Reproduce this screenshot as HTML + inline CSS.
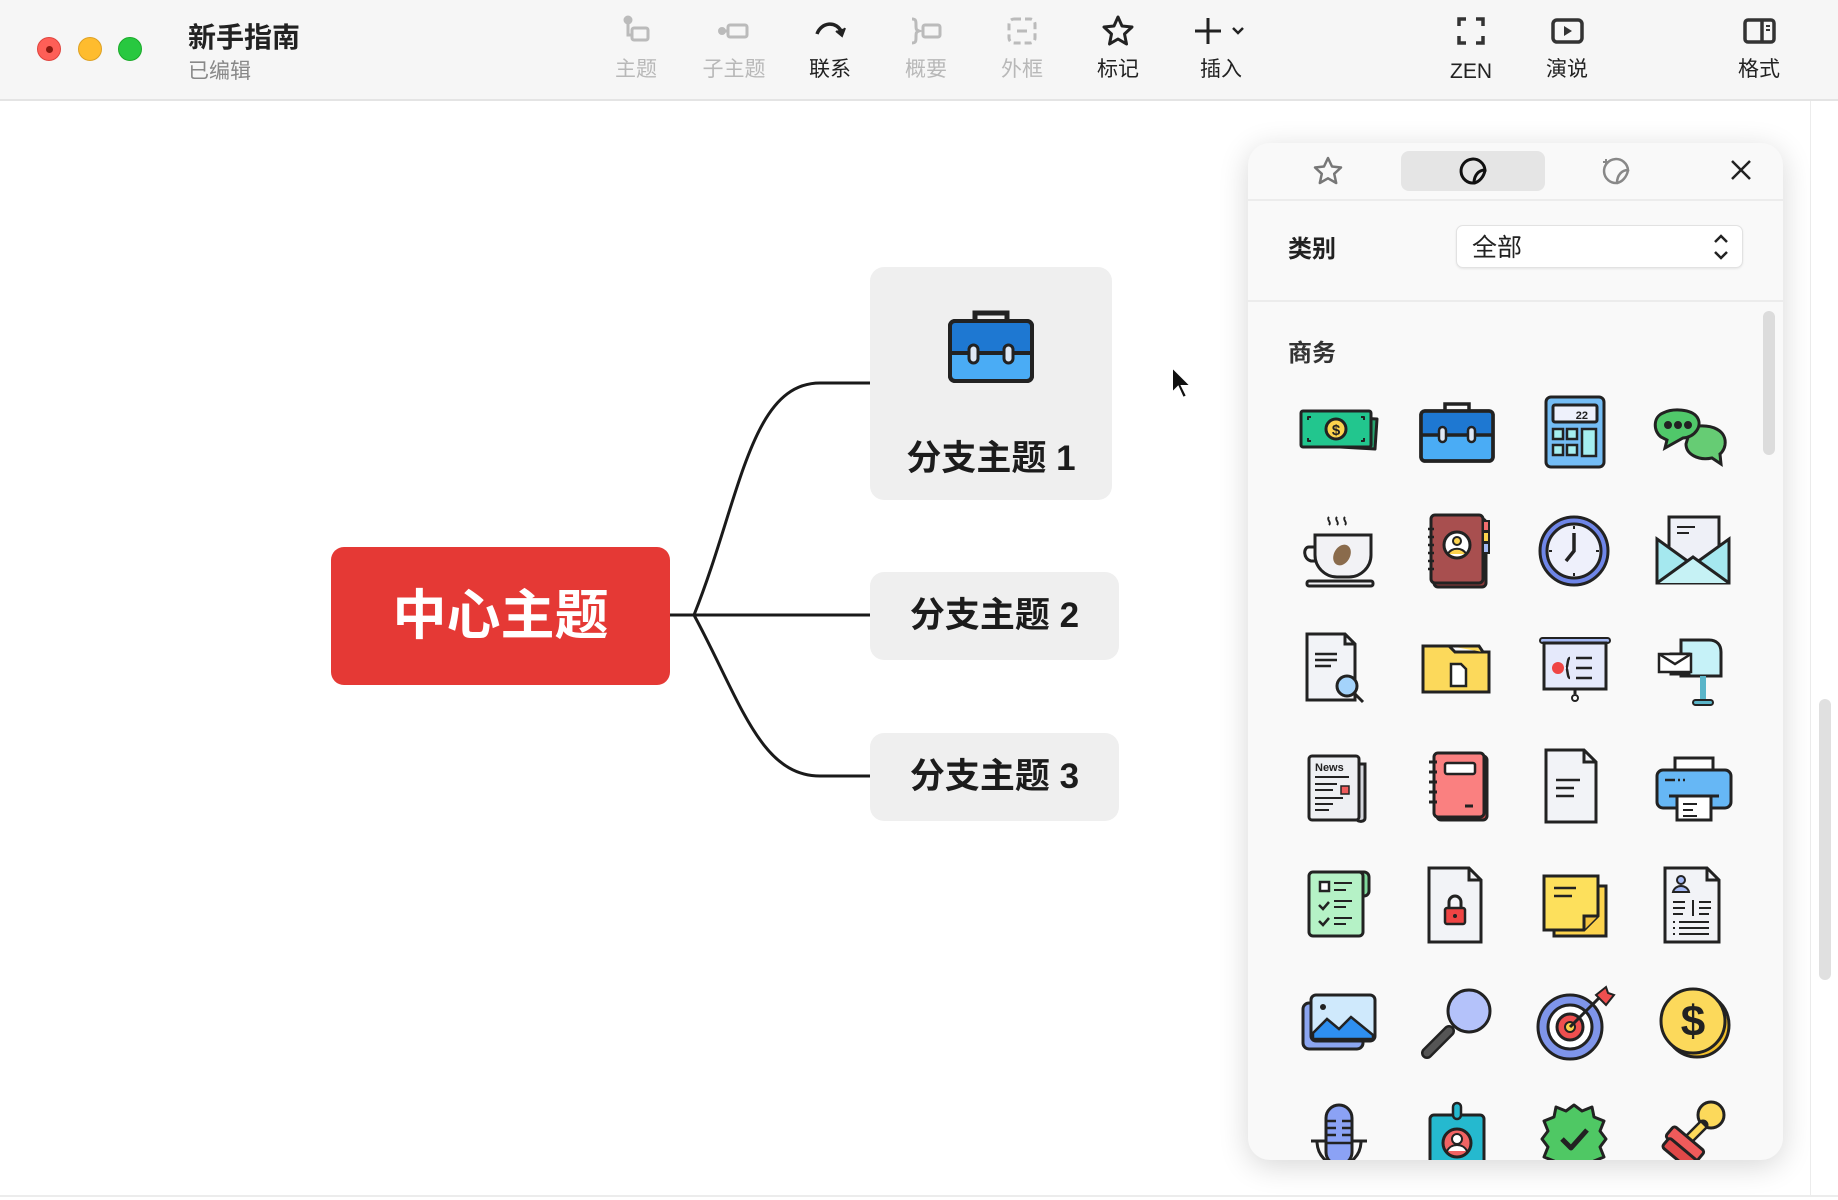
<!DOCTYPE html>
<html><head><meta charset="utf-8">
<style>
*{margin:0;padding:0;box-sizing:border-box}
body{width:1838px;height:1200px;background:#fff;font-family:"Liberation Sans","Noto Sans CJK SC",sans-serif;position:relative;overflow:hidden;color:#222}
.abs{position:absolute}
.tb{position:absolute;left:0;top:0;width:1838px;height:101px;background:#f6f6f6;border-bottom:2px solid #e4e4e4}
.dot{position:absolute;top:37px;width:24px;height:24px;border-radius:50%}
.item{position:absolute;top:14px;width:100px;margin-left:-50px;text-align:center;font-size:21px;line-height:28px}
.item svg{display:block;margin:0 auto 7px;width:34px;height:34px}
.item span{display:block;height:28px;line-height:30px}
.g{color:#b8b8b8}
.node{position:absolute;background:#efefef;border-radius:14px;font-weight:bold;font-size:35px;text-align:center;color:#1c1c1c}
.ic{position:absolute;width:84px;height:84px}
</style></head><body>
<div class="tb">
 <div class="dot" style="left:37px;background:#fe5f57;border:1px solid #e0443e"><div style="position:absolute;left:8px;top:8px;width:7px;height:7px;border-radius:50%;background:#8c1a10"></div></div>
 <div class="dot" style="left:78px;background:#febc2e;border:1px solid #dea123"></div>
 <div class="dot" style="left:118px;background:#28c840;border:1px solid #1aab29"></div>
 <div class="abs" style="left:188px;top:16px;font-size:28px;font-weight:bold;color:#222">新手指南</div>
 <div class="abs" style="left:188px;top:55px;font-size:21px;color:#888">已编辑</div>

 <div class="item g" style="left:636px"><svg viewBox="0 0 34 34" fill="none" stroke="#bbb" stroke-width="3"><circle cx="9" cy="6" r="3" fill="#bbb"/><path d="M9 9v12h4"/><rect x="13" y="14" width="16" height="12" rx="2"/></svg><span>主题</span></div>
 <div class="item g" style="left:734px"><svg viewBox="0 0 34 34" fill="none" stroke="#bbb" stroke-width="3"><circle cx="5" cy="17" r="2.5" fill="#bbb"/><path d="M7 17h4"/><rect x="11" y="11" width="19" height="12" rx="2"/></svg><span>子主题</span></div>
 <div class="item" style="left:830px;color:#222"><svg viewBox="0 0 34 34" fill="none" stroke="#222" stroke-width="3.5"><path d="M4 20C8 8 24 6 29 19"/><path d="M23 17l6 5 3-8" fill="#222" stroke-width="2"/></svg><span>联系</span></div>
 <div class="item g" style="left:926px"><svg viewBox="0 0 34 34" fill="none" stroke="#bbb" stroke-width="3"><path d="M3 5c4 0 4 2 4 6s0 5 3 6c-3 1-3 2-3 6s0 6-4 6"/><rect x="14" y="11" width="17" height="12" rx="2"/></svg><span>概要</span></div>
 <div class="item g" style="left:1022px"><svg viewBox="0 0 34 34" fill="none" stroke="#bbb" stroke-width="3"><rect x="4" y="5" width="26" height="24" rx="5" stroke-dasharray="7 4"/><path d="M12 17h10"/></svg><span>外框</span></div>
 <div class="item" style="left:1118px;color:#222"><svg viewBox="0 0 34 34" fill="none" stroke="#222" stroke-width="3" stroke-linejoin="round"><path d="M17 3l4 9 10 1-7.5 7 2 10L17 25l-8.5 5 2-10L3 13l10-1z"/></svg><span>标记</span></div>
 <div class="item" style="left:1221px;color:#222"><svg viewBox="0 0 60 34" style="width:60px" fill="none" stroke="#222" stroke-width="3"><path d="M17 4v26M4 17h26"/><path d="M42 14l5 5 5-5" stroke-width="2.5"/></svg><span>插入</span></div>
 <div class="item" style="left:1471px;color:#222"><svg viewBox="0 0 34 34" fill="none" stroke="#333" stroke-width="3.5"><path d="M5 12V5h7M22 5h7v7M29 22v7h-7M12 29H5v-7"/></svg><span style="line-height:34px">ZEN</span></div>
 <div class="item" style="left:1567px;color:#222"><svg viewBox="0 0 34 34" fill="none" stroke="#333" stroke-width="3.5"><rect x="3" y="6" width="29" height="22" rx="4"/><path d="M14 12v10l8-5z" fill="#333" stroke="none"/></svg><span>演说</span></div>
 <div class="item" style="left:1759px;color:#222"><svg viewBox="0 0 34 34" fill="none" stroke="#333" stroke-width="3.5"><rect x="3" y="6" width="29" height="22" rx="3"/><path d="M20 6v22"/><path d="M24 12h4M24 16h4" stroke-width="2"/></svg><span>格式</span></div>
</div>

<svg class="abs" style="left:0;top:0" width="1838" height="1200" fill="none" stroke="#1a1a1a" stroke-width="3">
 <path d="M669 615H694"/>
 <path d="M694 615C740 500 750 383 820 383H870"/>
 <path d="M694 615H870"/>
 <path d="M694 615C740 700 760 776 820 776H870"/>
</svg>
<div class="abs" style="left:331px;top:547px;width:339px;height:138px;background:#e53935;border-radius:13px;color:#fff;font-size:54px;font-weight:bold;text-align:center;line-height:138px">中心主题</div>
<div class="node" style="left:870px;top:267px;width:242px;height:233px">
 <svg style="position:absolute;left:77px;top:40px" width="88" height="80" viewBox="0 0 88 80"><path d="M28 14V6h32v8" fill="none" stroke="#222" stroke-width="5"/><rect x="3" y="14" width="82" height="60" rx="5" fill="#4aacf5" stroke="#222" stroke-width="4"/><path d="M5 16h78v30H5z" fill="#1e78d2"/><path d="M3 46h82" stroke="#222" stroke-width="4"/><rect x="3" y="14" width="82" height="60" rx="5" fill="none" stroke="#222" stroke-width="4"/><rect x="22" y="38" width="9" height="18" rx="4.5" fill="#dfe8f5" stroke="#222" stroke-width="3"/><rect x="57" y="38" width="9" height="18" rx="4.5" fill="#dfe8f5" stroke="#222" stroke-width="3"/></svg>
 <div style="position:absolute;left:0;right:0;top:163px">分支主题 1</div>
</div>
<div class="node" style="left:870px;top:572px;width:249px;height:88px;line-height:88px">分支主题 2</div>
<div class="node" style="left:870px;top:733px;width:249px;height:88px;line-height:88px">分支主题 3</div>
<svg class="abs" style="left:1170px;top:365px" width="24" height="36" viewBox="0 0 24 36"><path d="M2 2v26l6-6 5 11 4-2-5-10h9z" fill="#111" stroke="#fff" stroke-width="2"/></svg>

<div class="abs" style="left:1810px;top:101px;width:1px;height:1095px;background:#ececec"></div>
<div class="abs" style="left:0;top:1195px;width:1838px;height:2px;background:#ececec"></div>
<div class="abs" style="left:1819px;top:699px;width:12px;height:281px;border-radius:6px;background:#e0e0e0"></div>

<div class="abs" style="left:1248px;top:143px;width:535px;height:1017px;background:#f9f9f9;border-radius:22px;box-shadow:0 6px 30px rgba(0,0,0,.16);overflow:hidden">
 <div class="abs" style="left:0;top:56px;width:535px;height:2px;background:#ececec"></div>
 <div class="abs" style="left:153px;top:8px;width:144px;height:40px;border-radius:8px;background:#e5e5e5"></div>
 <svg class="abs" style="left:64px;top:12px" width="32" height="32" viewBox="0 0 32 32" fill="none" stroke="#777" stroke-width="2.5" stroke-linejoin="round"><path d="M16 3l4 8.5 9 1-6.8 6.3 2 9.2L16 23.3 7.8 28l2-9.2L3 12.5l9-1z"/></svg>
 <svg class="abs" style="left:209px;top:12px" width="32" height="32" viewBox="0 0 32 32" fill="none" stroke="#111" stroke-width="3"><path d="M17 28A12 12 0 1 1 28 15C22 15 17 20 17 28z"/><path d="M28 15c-1 7-6 12-11 13"/></svg>
 <svg class="abs" style="left:352px;top:12px" width="32" height="32" viewBox="0 0 32 32" fill="none" stroke="#888" stroke-width="2.5"><path d="M17 28A12 12 0 1 1 28 15C22 15 17 20 17 28z"/><path d="M28 15c-1 7-6 12-11 13"/><path d="M6 4v6M3 7h6" stroke-width="2"/></svg>
 <svg class="abs" style="left:480px;top:14px" width="26" height="26" viewBox="0 0 26 26" stroke="#222" stroke-width="2.5"><path d="M4 4l18 18M22 4L4 22"/></svg>
 <div class="abs" style="left:40px;top:86px;font-size:24px;font-weight:bold;color:#222">类别</div>
 <div class="abs" style="left:208px;top:82px;width:287px;height:43px;background:#fff;border:1px solid #e2e2e2;border-radius:7px;box-shadow:0 1px 2px rgba(0,0,0,.08);font-size:25px;line-height:44px;padding-left:15px;color:#222">全部
  <svg class="abs" style="right:12px;top:6px" width="18" height="30" viewBox="0 0 18 30" fill="none" stroke="#222" stroke-width="2.5"><path d="M3 10l6-6 6 6M3 20l6 6 6-6"/></svg></div>
 <div class="abs" style="left:0;top:157px;width:535px;height:2px;background:#ececec"></div>
 <div class="abs" style="left:40px;top:190px;font-size:24px;font-weight:bold;color:#333">商务</div>
 <div class="abs" style="left:515px;top:168px;width:12px;height:144px;border-radius:6px;background:#dcdcdc"></div>
</div>

<div class="abs" style="left:1248px;top:143px;width:535px;height:1017px;border-radius:22px;overflow:hidden">
<div style="position:absolute;left:-1248px;top:-143px;width:1838px;height:1200px">
<svg class="ic" style="left:1297px;top:389px" viewBox="0 0 84 84" stroke="#222" stroke-width="3" stroke-linejoin="round"><path d="M10 26l70 4-2 30-70-4z" fill="#27a36f"/><rect x="4" y="22" width="70" height="36" rx="2" fill="#22c68e"/><circle cx="39" cy="40" r="10" fill="#fcd34d"/><text x="39" y="46" font-size="15" text-anchor="middle" fill="#222" stroke="none" font-weight="bold" font-family="Liberation Sans">$</text><path d="M11 31v-3h3M67 31v-3h-3M11 49v3h3M67 49v3h-3" fill="none" stroke-width="2"/></svg>
<svg class="ic" style="left:1415px;top:389px" viewBox="0 0 84 84" stroke="#222" stroke-width="3.5"><path d="M30 22v-7h24v7" fill="none"/><rect x="6" y="22" width="72" height="50" rx="4" fill="#4aacf5"/><path d="M8 24h68v22H8z" fill="#1e78d2" stroke="none"/><path d="M6 46h72" /><rect x="6" y="22" width="72" height="50" rx="4" fill="none"/><rect x="24" y="38" width="7" height="15" rx="3.5" fill="#dfe8f5" stroke-width="2.5"/><rect x="53" y="38" width="7" height="15" rx="3.5" fill="#dfe8f5" stroke-width="2.5"/></svg>
<svg class="ic" style="left:1532px;top:389px" viewBox="0 0 84 84" stroke="#222" stroke-width="3"><rect x="14" y="8" width="58" height="70" rx="5" fill="#74bdf5"/><rect x="21" y="16" width="44" height="17" rx="2" fill="#eef1fb"/><text x="56" y="30" font-size="11" text-anchor="end" fill="#222" stroke="none" font-weight="bold" font-family="Liberation Sans">22</text><rect x="21" y="40" width="10" height="10" fill="#a5eef0" stroke-width="2.5"/><rect x="35" y="40" width="10" height="10" fill="#a5eef0" stroke-width="2.5"/><rect x="21" y="56" width="10" height="10" fill="#a5eef0" stroke-width="2.5"/><rect x="35" y="56" width="10" height="10" fill="#a5eef0" stroke-width="2.5"/><rect x="50" y="40" width="14" height="27" fill="#a5eef0" stroke-width="2.5"/></svg>
<svg class="ic" style="left:1651px;top:389px" viewBox="0 0 84 84" stroke="#222" stroke-width="3"><path d="M40 38c22-4 36 4 34 18-1 6-5 9-5 9l1 10-9-6c-14 3-26-4-26-14z" fill="#66cc74"/><path d="M10 48C2 42 2 28 12 24c10-5 28-4 34 4 6 9-2 20-14 21l-18 10 2-8z" fill="#50c86a"/><circle cx="17" cy="36" r="2.5" fill="#222"/><circle cx="27" cy="36" r="2.5" fill="#222"/><circle cx="37" cy="36" r="2.5" fill="#222"/></svg>

<svg class="ic" style="left:1297px;top:509px" viewBox="0 0 84 84" stroke="#222" stroke-width="3"><path d="M32 8c-3 3 3 5 0 8M40 8c-3 3 3 5 0 8M48 8c-3 3 3 5 0 8" fill="none" stroke-width="2"/><path d="M18 38h-6c-6 0-6 12 2 14h6" fill="none"/><path d="M18 26h56v20c0 12-10 22-22 22h-12c-12 0-22-10-22-22z" fill="#f2f2f5"/><ellipse cx="45" cy="46" rx="8" ry="11" transform="rotate(30 45 46)" fill="#8a6b4c" stroke="none"/><rect x="10" y="72" width="66" height="5" rx="2" fill="#f2f2f5"/></svg>
<svg class="ic" style="left:1415px;top:509px" viewBox="0 0 84 84" stroke="#222" stroke-width="3"><rect x="19" y="10" width="52" height="68" rx="4" fill="#8e3b3b"/><rect x="16" y="6" width="52" height="68" rx="4" fill="#a84f4f"/><rect x="68" y="12" width="6" height="10" fill="#f16d6d" stroke-width="2"/><rect x="68" y="23" width="6" height="10" fill="#fcd34d" stroke-width="2"/><rect x="68" y="34" width="6" height="10" fill="#a5b9f4" stroke-width="2"/><circle cx="42" cy="36" r="13" fill="#fff"/><circle cx="42" cy="32" r="4" fill="#fcd34d" stroke-width="2"/><path d="M33 45c3-7 15-7 18 0" fill="#fcd34d" stroke-width="2"/><path d="M13 20h6M13 28h6M13 36h6M13 44h6M13 52h6M13 60h6" stroke-width="2.5"/></svg>
<svg class="ic" style="left:1532px;top:509px" viewBox="0 0 84 84" stroke="#222" stroke-width="3"><circle cx="42" cy="42" r="34" fill="#6f86e8"/><circle cx="42" cy="42" r="27" fill="#eef0fb"/><path d="M42 24v18l-8 10" fill="none" stroke-width="3.5"/><path d="M42 17v3M42 64v3M17 42h3M64 42h3" stroke-width="2"/></svg>
<svg class="ic" style="left:1651px;top:509px" viewBox="0 0 84 84" stroke="#222" stroke-width="3"><rect x="18" y="8" width="50" height="45" fill="#eef0f7"/><path d="M26 18h18M26 24h12" stroke-width="2"/><path d="M6 30l36 26 36-26v44H6z" fill="#a5e8ef"/><path d="M6 74l36-26 36 26" fill="#c6f2f5"/></svg>

<svg class="ic" style="left:1297px;top:628px" viewBox="0 0 84 84" stroke="#222" stroke-width="3"><path d="M10 6h38l10 10v56H10z" fill="#f2f3f7"/><path d="M48 6v10h10" fill="none"/><path d="M18 26h22M18 32h22M18 38h16" stroke-width="2.5"/><path d="M58 66l8 8" stroke-width="3"/><circle cx="50" cy="58" r="10" fill="#a4d3fb"/></svg>
<svg class="ic" style="left:1415px;top:628px" viewBox="0 0 84 84" stroke="#222" stroke-width="3"><path d="M8 18h26l6 6h34v40H8z" fill="#fcd95b"/><path d="M34 18h30l4 6" fill="#fcd95b"/><path d="M36 36h10l5 5v17H36z" fill="#fff" stroke-width="2.5"/></svg>
<svg class="ic" style="left:1532px;top:628px" viewBox="0 0 84 84" stroke="#222" stroke-width="3"><rect x="8" y="10" width="70" height="5" rx="2.5" fill="#a5b9f4" stroke-width="2"/><rect x="12" y="15" width="62" height="46" fill="#e5e9fb"/><circle cx="26" cy="40" r="6" fill="#ef4444" stroke="none"/><path d="M38 30c-3 0-2 10-4 10 2 0 1 10 4 10M44 30h16M44 40h16M44 50h16" fill="none" stroke-width="2.5"/><path d="M43 61v5"/><circle cx="43" cy="70" r="3" fill="#fff" stroke-width="2"/></svg>
<svg class="ic" style="left:1651px;top:628px" viewBox="0 0 84 84" stroke="#222" stroke-width="3"><path d="M30 12h28c8 0 12 5 12 12v24H30z" fill="#c6f2f8"/><path d="M52 48v26" stroke="#5ab5c9" stroke-width="6"/><rect x="42" y="72" width="20" height="5" rx="2.5" fill="#5ab5c9" stroke-width="2"/><path d="M20 26h18v20H20z" fill="#88d5e4"/><rect x="8" y="26" width="32" height="18" fill="#fff" stroke-width="2.5"/><path d="M8 26l16 10 16-10" fill="none" stroke-width="2.5"/></svg>

<svg class="ic" style="left:1297px;top:746px" viewBox="0 0 84 84" stroke="#222" stroke-width="3"><path d="M60 18h8v54c0 4-6 4-8 2" fill="#d4d6dc"/><rect x="12" y="10" width="50" height="64" rx="3" fill="#eef0f3"/><text x="18" y="25" font-size="11" font-weight="bold" fill="#222" stroke="none" font-family="Liberation Sans">News</text><path d="M18 31h34M18 38h22M18 44h18M18 52h28M18 58h18M18 64h14" stroke-width="2"/><rect x="44" y="40" width="8" height="8" fill="#ef5b5b" stroke-width="1.5"/></svg>
<svg class="ic" style="left:1415px;top:746px" viewBox="0 0 84 84" stroke="#222" stroke-width="3"><rect x="22" y="10" width="50" height="64" rx="4" fill="#d04a4a"/><rect x="19" y="7" width="50" height="64" rx="4" fill="#fa8080"/><rect x="30" y="17" width="30" height="11" rx="2" fill="#fff" stroke-width="2.5"/><path d="M50 60h8" stroke-width="3"/><path d="M14 16h8M14 26h8M14 36h8M14 46h8M14 56h8" stroke-width="3"/></svg>
<svg class="ic" style="left:1532px;top:746px" viewBox="0 0 84 84" stroke="#222" stroke-width="3"><path d="M14 4h38l12 12v60H14z" fill="#f2f3f7"/><path d="M52 4v12h12" fill="none"/><path d="M24 34h24M24 42h18M24 50h18" stroke-width="2.5"/></svg>
<svg class="ic" style="left:1651px;top:746px" viewBox="0 0 84 84" stroke="#222" stroke-width="3"><rect x="24" y="12" width="38" height="14" fill="#fff"/><rect x="6" y="24" width="74" height="38" rx="6" fill="#66b7f5"/><path d="M14 34h10M27 34h2M32 34h2" stroke-width="2.5"/><path d="M18 50h50" stroke-width="3"/><rect x="26" y="50" width="34" height="24" fill="#fff"/><path d="M32 58h14M32 64h10M32 70h14" stroke-width="2"/></svg>

<svg class="ic" style="left:1297px;top:864px" viewBox="0 0 84 84" stroke="#222" stroke-width="3"><rect x="56" y="8" width="16" height="24" rx="5" fill="#7fd89b"/><rect x="12" y="8" width="54" height="64" rx="4" fill="#b5f2c6"/><rect x="23" y="18" width="9" height="9" fill="#fff" stroke-width="2.5"/><path d="M37 19h18M37 26h12M37 37h18M37 43h12M37 54h18M37 60h12" stroke-width="2"/><path d="M22 41l4 4 6-7M22 57l4 4 6-7" fill="none" stroke-width="2.5"/></svg>
<svg class="ic" style="left:1415px;top:864px" viewBox="0 0 84 84" stroke="#222" stroke-width="3"><path d="M14 4h40l12 12v62H14z" fill="#f2f3f7"/><path d="M54 4v12h12" fill="none"/><path d="M34 44v-6a6 6 0 0 1 12 0v6" fill="none" stroke-width="3"/><rect x="30" y="44" width="20" height="16" rx="2" fill="#ef4444" stroke-width="2.5"/><circle cx="40" cy="52" r="2" fill="#222" stroke="none"/></svg>
<svg class="ic" style="left:1532px;top:864px" viewBox="0 0 84 84" stroke="#222" stroke-width="3"><rect x="22" y="22" width="52" height="50" fill="#fcd34d"/><path d="M12 12h54v40l-14 14H12z" fill="#fde05c"/><path d="M52 66V52h14" fill="#f4c33e"/><path d="M22 24h22M22 32h18" stroke-width="2.5"/></svg>
<svg class="ic" style="left:1651px;top:864px" viewBox="0 0 84 84" stroke="#222" stroke-width="3"><path d="M14 4h42l12 12v62H14z" fill="#f2f3f7"/><path d="M56 4v12h12" fill="none"/><circle cx="30" cy="16" r="4" fill="#a5b9f4" stroke-width="2"/><path d="M22 28c2-8 14-8 16 0z" fill="#a5b9f4" stroke-width="2"/><path d="M22 38h12M22 44h12M22 50h10M42 36v16M48 38h12M48 44h12M48 50h10M22 58h2M28 58h30M22 64h2M28 64h30M22 70h2M28 70h30" stroke-width="2"/></svg>

<svg class="ic" style="left:1297px;top:981px" viewBox="0 0 84 84" stroke="#222" stroke-width="3"><rect x="6" y="22" width="60" height="46" rx="6" fill="#8ba5f0"/><rect x="14" y="14" width="64" height="46" rx="5" fill="#cfe9fc"/><path d="M16 52l14-14 12 10 12-12 22 18v4H16z" fill="#2e8ff0" stroke-width="2.5"/><circle cx="26" cy="26" r="3" fill="#222" stroke="none"/></svg>
<svg class="ic" style="left:1415px;top:981px" viewBox="0 0 84 84" stroke="#222" stroke-width="3"><path d="M12 72l22-22" stroke="#222" stroke-width="12" stroke-linecap="round"/><path d="M12 72l22-22" stroke="#555" stroke-width="7" stroke-linecap="round"/><circle cx="54" cy="30" r="21" fill="#b4c2fa"/></svg>
<svg class="ic" style="left:1532px;top:981px" viewBox="0 0 84 84" stroke="#222" stroke-width="3"><circle cx="38" cy="46" r="32" fill="#7f95ea"/><circle cx="38" cy="46" r="22" fill="#fff"/><circle cx="38" cy="46" r="13" fill="#ef4f4f"/><circle cx="38" cy="46" r="5" fill="#fcd34d" stroke-width="2"/><path d="M38 46l34-34" stroke-width="3"/><path d="M64 14l10-8 2 6 6 2-8 10z" fill="#ef4f4f" stroke-width="2"/></svg>
<svg class="ic" style="left:1651px;top:981px" viewBox="0 0 84 84" stroke="#222" stroke-width="3"><circle cx="46" cy="44" r="32" fill="#f1bf2a"/><circle cx="42" cy="40" r="32" fill="#fcd95b"/><text x="42" y="55" font-size="44" font-weight="bold" text-anchor="middle" fill="#222" stroke="none" font-family="Liberation Sans">$</text></svg>

<svg class="ic" style="left:1297px;top:1095px" viewBox="0 0 84 84" stroke="#222" stroke-width="3"><path d="M14 46h56M20 46c0 14 10 24 22 24s22-10 22-24" fill="none"/><rect x="29" y="10" width="26" height="60" rx="13" fill="#8ba2f5"/><path d="M29 26h10M45 26h10M29 33h10M45 33h10M29 40h10M45 40h10M29 48h26" stroke-width="2.5"/></svg>
<svg class="ic" style="left:1415px;top:1095px" viewBox="0 0 84 84" stroke="#222" stroke-width="3"><rect x="15" y="20" width="54" height="70" rx="4" fill="#25b9cf"/><rect x="38" y="8" width="8" height="16" rx="4" fill="#25b9cf" stroke-width="2.5"/><circle cx="42" cy="48" r="14" fill="#f16363"/><circle cx="42" cy="44" r="5" fill="#fff" stroke-width="2"/><path d="M32 56c4-8 16-8 20 0" fill="#fff" stroke-width="2"/></svg>
<svg class="ic" style="left:1532px;top:1095px" viewBox="0 0 84 84" stroke="#222" stroke-width="3" stroke-linejoin="round"><path d="M42 10l8 6 10-4 2 10 10 4-4 10 6 8-6 8 4 10-10 4-2 10-10-4-8 6-8-6-10 4-2-10-10-4 4-10-6-8 6-8-4-10 10-4 2-10 10 4z" fill="#4fc864"/><path d="M30 44l9 9 16-18" fill="none" stroke-width="5"/></svg>
<svg class="ic" style="left:1651px;top:1095px" viewBox="0 0 84 84" stroke="#222" stroke-width="3"><circle cx="60" cy="20" r="13" fill="#fcd95b"/><path d="M52 30L38 44" stroke="#222" stroke-width="11" stroke-linecap="round"/><path d="M52 30L38 44" stroke="#fcd95b" stroke-width="6"/><rect x="14" y="42" width="40" height="14" rx="3" transform="rotate(40 34 49)" fill="#ef5b5b"/><rect x="10" y="54" width="40" height="12" rx="3" transform="rotate(40 30 60)" fill="#e04848"/></svg>
</div></div>
</body></html>
